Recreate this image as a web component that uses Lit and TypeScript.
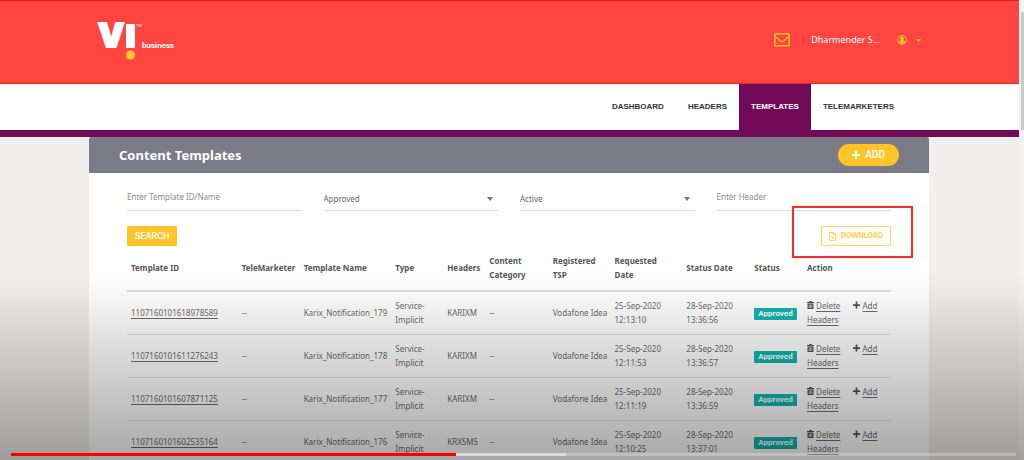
import { LitElement, html, css, svg } from "lit";
import { customElement, property, state } from "lit/decorators.js";

interface TemplateRow {
  id: string;
  name: string;
  header: string;
  requested: string;
  changed: string;
}

const ROWS: TemplateRow[] = [
  { id: "1107160101618978589", name: "Karix_Notification_179", header: "KARIXM", requested: "12:13:10", changed: "13:36:56" },
  { id: "1107160101611276243", name: "Karix_Notification_178", header: "KARIXM", requested: "12:11:53", changed: "13:36:57" },
  { id: "1107160101607871125", name: "Karix_Notification_177", header: "KARIXM", requested: "12:11:19", changed: "13:36:59" },
  { id: "1107160101602535164", name: "Karix_Notification_176", header: "KRXSMS", requested: "12:10:25", changed: "13:37:01" },
];

const COLUMNS: Array<[string, number]> = [
  ["Template ID", 14.5],
  ["TeleMarketer", 8.1],
  ["Template Name", 12],
  ["Type", 6.8],
  ["Headers", 5.5],
  ["Content Category", 8.3],
  ["Registered TSP", 8.1],
  ["Requested Date", 9.4],
  ["Status Date", 8.9],
  ["Status", 6.9],
  ["Action", 11.5],
];

const plus = svg`<path d="M4 1h2v3h3v2h-3v3h-2v-3h-3v-2h3z" fill="currentColor"/>`;

@customElement("site-header")
export class SiteHeader extends LitElement {
  static styles = css`
    :host { display: block; }
    .bar {
      display: flex;
      justify-content: space-between;
      align-items: center;
      box-sizing: border-box;
      height: 84px;
      padding: 0 98px 4px 96px;
      background: #ff453f;
      border-top: 1px solid #e01b1b;
      border-bottom: 1px solid #f3251f;
    }
    .logo { display: block; width: 84px; height: 56px; }
    .mark { font: 900 33px Inter, sans-serif; fill: #fff; stroke: #fff; stroke-width: 2px; }
    .tm { font: 4px Roboto, sans-serif; fill: #fff; }
    .unit { font: 700 8px Roboto, sans-serif; fill: #fff; }
    .account { display: flex; align-items: center; color: #ffc42a; }
    .mail { width: 16px; height: 14px; margin-right: 21px; display: block; }
    .name { color: #fff; font: 9px/16px "Noto Sans", sans-serif; margin-right: 17px; }
    .menu {
      display: flex;
      align-items: center;
      gap: 9px;
      padding: 0;
      border: 0;
      background: none;
      color: inherit;
    }
    .user { width: 10px; height: 10px; }
    .caret { width: 5px; height: 3px; }
    .nav {
      display: flex;
      justify-content: flex-end;
      height: 46px;
      padding-right: 113px;
      background: #fff;
      border-bottom: 7px solid #720b57;
    }
    .link {
      display: flex;
      align-items: center;
      padding: 0 12px;
      color: #333;
      font: 700 8px/12px "Liberation Sans", sans-serif;
      text-decoration: none;
    }
    .active { background: #720b57; color: #fff; }
  `;

  render() {
    const links = ["DASHBOARD", "HEADERS", "TEMPLATES", "TELEMARKETERS"];
    return html`
      <header class="bar">
        <svg class="logo" viewBox="0 0 84 56" role="img" aria-label="VI business">
          <text class="mark" x="2" y="35">V</text>
          <rect x="30" y="12" width="9" height="24" fill="#fff" />
          <text class="tm" x="40" y="15">TM</text>
          <circle cx="34.5" cy="43" r="4.7" fill="#ffc42a" />
          <text class="unit" x="46" y="36">business</text>
        </svg>
        <div class="account">
          <svg class="mail" viewBox="0 0 16 14" fill="none" stroke="currentColor" stroke-width="1.4">
            <rect x="0.8" y="0.8" width="14.4" height="12" rx="1.4" />
            <path d="M1 3.2L6.4 8q1.6 1.3 3.2 0L15 3.2" />
          </svg>
          <span class="name">Dharmender S...</span>
          <button class="menu" aria-label="Account">
            <svg class="user" viewBox="0 0 10 10">
              <circle cx="5" cy="5" r="4.4" fill="none" stroke="currentColor" />
              <path d="M5 1.6c1.5 0 1.9 1.2 1.7 2.4-.1.8-.3 1.1-.5 1.5.8.4 1.8.5 1.9 1.5Q7 9 5 9T1.900 7c.1-1 1.100-1.100 1.900-1.500-.2-.4-.4-.7-.5-1.500C3.100 2.800 3.500 1.600 5 1.600z" fill="currentColor" />
            </svg>
            <svg class="caret" viewBox="0 0 5 3"><path d="M0 0h5L2.500 3z" fill="currentColor" /></svg>
          </button>
        </div>
      </header>
      <nav class="nav">
        ${links.map((l) => html`<a class="link ${l === "TEMPLATES" ? "active" : ""}" href="#">${l}</a>`)}
      </nav>
    `;
  }
}

@customElement("template-filters")
export class TemplateFilters extends LitElement {
  static styles = css`
    :host { display: block; }
    .fields { display: grid; grid-template-columns: repeat(4, 1fr); gap: 22px; }
    .box {
      box-sizing: border-box;
      width: 100%;
      min-width: 0;
      height: 26px;
      margin: 0;
      padding: 0 0 2px;
      border: 0;
      border-bottom: 1px solid #dcdce0;
      border-radius: 0;
      background: transparent;
      color: #666;
      font: 8px/14px "Noto Sans", sans-serif;
      outline: 0;
    }
    .box::placeholder { color: #8a8a90; opacity: 1; }
    .pick { display: grid; align-items: center; }
    .pick > * { grid-area: 1 / 1; }
    .select { appearance: none; padding: 2px 0 0; }
    .arrow { width: 6px; height: 4px; justify-self: end; margin: 2px 5px 0 0; color: #777; pointer-events: none; }
    .actions { display: flex; justify-content: space-between; margin-top: 15px; }
    .search, .download {
      box-sizing: border-box;
      height: 20px;
      border-radius: 1px;
      padding: 0 7px;
    }
    .search { padding: 0 8px; border: 0; background: #ffc42a; color: #fff; font: 500 9px/12px Roboto, sans-serif; }
    .callout { position: relative; }
    .callout::after {
      content: "";
      position: absolute;
      inset: -20px -22px -12px -29px;
      border: 2px solid #fb2a2a;
      pointer-events: none;
    }
    .download {
      display: flex;
      align-items: center;
      gap: 5px;
      background: #fffdf5;
      border: 1px solid #fbd676;
      color: #fbcf55;
      font: 700 7px/10px Inter, sans-serif;
    }
    .sheet { width: 7px; height: 9px; }
  `;

  private pick(label: string, options: string[]) {
    return html`
      <div class="pick">
        <select class="box select" aria-label=${label}>
          ${options.map((o) => html`<option>${o}</option>`)}
        </select>
        <svg class="arrow" viewBox="0 0 6 4"><path d="M0 0h6L3 4z" fill="currentColor" /></svg>
      </div>
    `;
  }

  render() {
    return html`
      <div class="fields">
        <input class="box" aria-label="Template ID or name" placeholder="Enter Template ID/Name" />
        ${this.pick("Approval", ["Approved"])}
        ${this.pick("State", ["Active"])}
        <input class="box" aria-label="Header" placeholder="Enter Header" />
      </div>
      <div class="actions">
        <button class="search">SEARCH</button>
        <div class="callout">
          <button class="download">
            <svg class="sheet" viewBox="0 0 7 9" fill="none" stroke="currentColor" stroke-width="0.9">
              <path d="M.5.5h4l2 2v6h-6zM4.500.5v2h2M2.200 4l2.600 3.200M4.800 4L2.200 7.200" />
            </svg>
            DOWNLOAD
          </button>
        </div>
      </div>
    `;
  }
}

@customElement("template-table")
export class TemplateTable extends LitElement {
  @property({ attribute: false }) rows: TemplateRow[] = [];

  static styles = css`
    :host { display: block; }
    .table {
      width: 100%;
      table-layout: fixed;
      border-collapse: separate;
      border-spacing: 0;
      color: #6c6c6c;
      font: 8px/14px "Noto Sans", sans-serif;
    }
    .head {
      padding: 8px 0 8px 4px;
      border-bottom: 2px solid #dedede;
      text-align: left;
      vertical-align: middle;
      color: #555;
      font: 700 8px/14px "Noto Sans", sans-serif;
    }
    .cell { padding: 7px 0 7px 4px; border-bottom: 1px solid #e0e0e0; vertical-align: middle; }
    .fixed { white-space: nowrap; }
    .id { color: inherit; text-decoration: underline; text-underline-offset: 2px; }
    .badge {
      display: inline-block;
      padding: 0 4px;
      border-radius: 1px;
      background: #11b5b0;
      color: #fff;
      font: 700 8px/12px Roboto, sans-serif;
    }
    .narrow { display: block; max-width: 48px; }
    .icon { width: 7px; height: 8px; margin-right: 2px; color: #505050; }
    .add { margin-left: 11px; }
  `;

  render() {
    return html`
      <table class="table">
        <colgroup>
          ${COLUMNS.map(([, w]) => html`<col style="width:${w}%" />`)}
        </colgroup>
        <thead>
          <tr>
            ${COLUMNS.map(([label]) => html`<th class="head" scope="col">${
              /^(Content|Registered|Requested)/.test(label)
                ? html`<span class="narrow">${label}</span>`
                : label
            }</th>`)}
          </tr>
        </thead>
        <tbody>
          ${this.rows.map((r) => html`
            <tr>
              <td class="cell"><a class="id" href="#">${r.id}</a></td>
              <td class="cell">--</td>
              <td class="cell fixed">${r.name}</td>
              <td class="cell">Service-<br />Implicit</td>
              <td class="cell">${r.header}</td>
              <td class="cell">--</td>
              <td class="cell fixed">Vodafone Idea</td>
              <td class="cell">25-Sep-2020<br />${r.requested}</td>
              <td class="cell">28-Sep-2020<br />${r.changed}</td>
              <td class="cell"><span class="badge">Approved</span></td>
              <td class="cell">
                <svg class="icon" viewBox="0 0 7 8"><path fill="currentColor" fill-rule="evenodd" d="M0 1h2l.5-1h2L5 1h2v1H0zM.5 2.500h6V8h-6zM1.800 3.500v3.500h.6V3.500zM3.200 3.500v3.500h.6V3.500zM4.600 3.500v3.500h.6V3.500z" /></svg><a class="id" href="#">Delete</a>
                <svg class="icon add" viewBox="1 1 8 8">${plus}</svg><a class="id" href="#"><span>Add</span> <span>Headers</span></a>
              </td>
            </tr>
          `)}
        </tbody>
      </table>
    `;
  }
}

@customElement("app-root")
export class AppRoot extends LitElement {
  @state() private played = 44.3;
  @state() private loaded = 55.2;

  static styles = css`
    :host {
      display: flex;
      position: relative;
      height: 100vh;
      overflow: hidden;
      background: #f0efed;
      font-family: "Noto Sans", sans-serif;
    }
    .page { flex: 1; min-width: 0; }
    .rail { width: 5px; background: #f3f3f3; padding-top: 12px; box-sizing: border-box; }
    .thumb { height: 118px; margin-left: 2px; background: #c9c9c9; }
    .card { margin: 0 90px 0 89px; background: #fff; }
    .title {
      display: flex;
      align-items: center;
      justify-content: space-between;
      height: 36px;
      padding: 0 30px;
      border-radius: 2px 2px 0 0;
      background: #7b7b88;
      color: #fff;
    }
    .heading { margin: 0; font: 700 13px/20px "Noto Sans", sans-serif; }
    .new {
      display: flex;
      align-items: center;
      justify-content: center;
      gap: 5px;
      height: 22px;
      padding: 0 14px;
      border: 0;
      border-radius: 11px;
      background: #ffc42a;
      color: #fff;
      font: 500 10px/14px Roboto, sans-serif;
    }
    .plus { width: 8px; height: 8px; }
    .body { padding: 12px 38px 40px; }
    .shade {
      position: absolute;
      inset: auto 0 0;
      height: 190px;
      background: linear-gradient(
        rgba(0, 0, 0, 0),
        rgba(0, 0, 0, 0.04) 15%,
        rgba(0, 0, 0, 0.11) 33%,
        rgba(0, 0, 0, 0.19) 56%,
        rgba(0, 0, 0, 0.27) 79%,
        rgba(0, 0, 0, 0.34)
      );
      pointer-events: none;
    }
    .track {
      position: absolute;
      inset: auto 8px 4px 11px;
      height: 3px;
      background: rgba(255, 255, 255, 0.25);
    }
    .loaded { height: 3px; background: rgba(255, 255, 255, 0.45); }
    .played { position: relative; height: 3px; margin-top: -3px; background: #f00; }
  `;

  render() {
    return html`
      <div class="page">
        <site-header></site-header>
        <main class="card">
          <div class="title">
            <h1 class="heading">Content Templates</h1>
            <button class="new">
              <svg class="plus" viewBox="1 1 8 8">${plus}</svg>ADD
            </button>
          </div>
          <div class="body">
            <template-filters></template-filters>
            <template-table .rows=${ROWS}></template-table>
          </div>
        </main>
      </div>
      <div class="rail"><div class="thumb"></div></div>
      <div class="shade"></div>
      <div class="track" role="progressbar" aria-label="Playback" aria-valuenow=${this.played}>
        <div class="loaded" style="width:${this.loaded}%"></div>
        <div class="played" style="width:${this.played}%"></div>
      </div>
    `;
  }
}
